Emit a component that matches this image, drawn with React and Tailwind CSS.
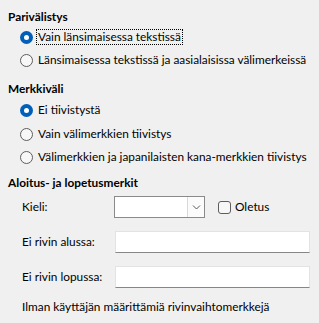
import React from 'react';

const Radio = ({ checked }) =>
  checked ? (
    <span className="flex h-[13px] w-[13px] shrink-0 items-center justify-center rounded-full bg-[#005fb8]">
      <span className="h-[5px] w-[5px] rounded-full bg-white" />
    </span>
  ) : (
    <span className="h-[13px] w-[13px] shrink-0 rounded-full border border-[#5d5d5d] bg-[#f7f7f7]" />
  );

const RadioRow = ({ checked, focused, label, className = '' }) => (
  <div className={`flex h-5 items-center whitespace-nowrap pl-[20px] ${className}`}>
    <Radio checked={checked} />
    <span
      className={`ml-[3px] leading-[14px] ${
        focused ? 'border border-dotted border-black px-[1px]' : 'ml-[5px]'
      }`}
    >
      {label}
    </span>
  </div>
);

const Heading = ({ children, className = '' }) => (
  <div className={`flex h-5 items-center pl-[8px] font-bold ${className}`}>{children}</div>
);

const TextField = () => (
  <div className="h-[22px] w-[195px] border border-[#e3e3e3] border-b-[#868686] bg-white" />
);

export default function App() {
  return (
    <div
      className="h-[323px] w-[319px] overflow-hidden bg-[#f0f0f0] pt-[7px] text-[11.85px] text-black"
      style={{ fontFamily: 'Lato, "Noto Sans", sans-serif' }}
    >
      <Heading>Parivälistys</Heading>
      <RadioRow checked focused label="Vain länsimaisessa tekstissä" />
      <RadioRow className="mt-[3px]" label="Länsimaisessa tekstissä ja aasialaisissa välimerkeissä" />

      <Heading className="mt-[9px]">Merkkiväli</Heading>
      <RadioRow className="mt-[1px]" checked label="Ei tiivistystä" />
      <RadioRow className="mt-[4px]" label="Vain välimerkkien tiivistys" />
      <RadioRow className="mt-[3px]" label="Välimerkkien ja japanilaisten kana-merkkien tiivistys" />

      <Heading className="mt-[6px]">Aloitus- ja lopetusmerkit</Heading>
      <div className="mt-[3px] flex h-[22px] items-center pl-[22px]">
        <span className="w-[92px]">Kieli:</span>
        <div className="flex h-[22px] w-[91px] border border-[#8a8a8a] bg-white">
          <div className="flex-1" />
          <div className="flex w-[17px] items-center justify-center border-l border-[#d9d9d9] bg-[#fbfbfb]">
            <svg width="9" height="6" viewBox="0 0 9 6" fill="none">
              <path d="M1 1.5l3.5 3.5L8 1.5" stroke="#5a5a5a" strokeWidth="1" />
            </svg>
          </div>
        </div>
        <span className="ml-[13px] h-[13px] w-[13px] rounded-[3px] border border-[#5d5d5d] bg-[#f7f7f7]" />
        <span className="ml-[4px]">Oletus</span>
      </div>

      <div className="mt-[13px] flex h-[22px] items-center pl-[22px]">
        <span className="w-[93px]">Ei rivin alussa:</span>
        <TextField />
      </div>
      <div className="mt-[13px] flex h-[22px] items-center pl-[22px]">
        <span className="w-[93px]">Ei rivin lopussa:</span>
        <TextField />
      </div>

      <div className="mt-[9px] flex h-5 items-center whitespace-nowrap pl-[22px]">
        Ilman käyttäjän määrittämiä rivinvaihtomerkkejä
      </div>
    </div>
  );
}
